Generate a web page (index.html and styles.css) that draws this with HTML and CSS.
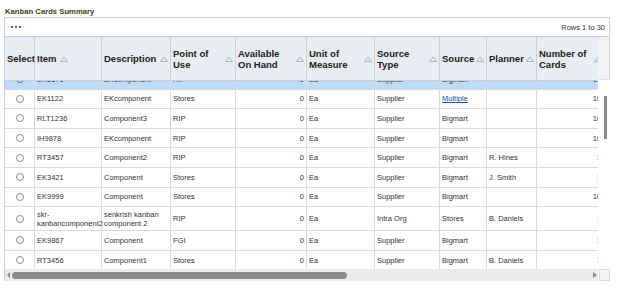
FILE: index.html
```html
<!DOCTYPE html>
<html lang="en">
<head>
    <meta charset="UTF-8">
    <title>Kanban Cards Summary</title>
    <link rel="stylesheet" href="styles.css">
</head>
<body>

<div class="panel">
    <div class="panel-title">Kanban Cards Summary</div>

    <div class="grid">
        <div class="toolbar">
            <span class="dots"><i></i><i></i><i></i></span>
            <span class="rows-info">Rows 1 to 30</span>
        </div>

        <div class="head-wrap">
            <div class="head-clip">
                <div class="head-row">
                    <div class="hcell">Select</div>
                    <div class="hcell hcell-tight"><span>Item</span><svg class="sort" width="8" height="6" viewBox="0 0 8 6"><path d="M0.5 5.5 L4 1 L7.5 5.5 Z"/></svg></div>
                    <div class="hcell"><span>Description</span><svg class="sort" width="8" height="6" viewBox="0 0 8 6"><path d="M0.5 5.5 L4 1 L7.5 5.5 Z"/></svg></div>
                    <div class="hcell"><span>Point of Use</span><svg class="sort" width="8" height="6" viewBox="0 0 8 6"><path d="M0.5 5.5 L4 1 L7.5 5.5 Z"/></svg></div>
                    <div class="hcell"><span>Available On Hand</span><svg class="sort" width="8" height="6" viewBox="0 0 8 6"><path d="M0.5 5.5 L4 1 L7.5 5.5 Z"/></svg></div>
                    <div class="hcell"><span>Unit of Measure</span><svg class="sort" width="8" height="6" viewBox="0 0 8 6"><path d="M0.5 5.5 L4 1 L7.5 5.5 Z"/></svg></div>
                    <div class="hcell"><span>Source Type</span><svg class="sort" width="8" height="6" viewBox="0 0 8 6"><path d="M0.5 5.5 L4 1 L7.5 5.5 Z"/></svg></div>
                    <div class="hcell"><span>Source</span><svg class="sort" width="8" height="6" viewBox="0 0 8 6"><path d="M0.5 5.5 L4 1 L7.5 5.5 Z"/></svg></div>
                    <div class="hcell"><span>Planner</span><svg class="sort" width="8" height="6" viewBox="0 0 8 6"><path d="M0.5 5.5 L4 1 L7.5 5.5 Z"/></svg></div>
                    <div class="hcell"><span>Number of Cards</span><svg class="sort" width="8" height="6" viewBox="0 0 8 6"><path d="M0.5 5.5 L4 1 L7.5 5.5 Z"/></svg></div>
                </div>
            </div>
            <div class="head-gutter"></div>
        </div>

        <div class="body-wrap">
            <div class="body-clip">
                <div class="rows">
                    <div class="row row-selected">
                        <div class="cell cell-select"><span class="radio radio-on"></span></div>
                        <div class="cell">EK5671</div>
                        <div class="cell">EKcomponent</div>
                        <div class="cell">RIP</div>
                        <div class="cell cell-num">0</div>
                        <div class="cell">Ea</div>
                        <div class="cell">Supplier</div>
                        <div class="cell">Bigmart</div>
                        <div class="cell"></div>
                        <div class="cell cell-num cell-last">10</div>
                    </div>
                    <div class="row">
                        <div class="cell cell-select"><span class="radio"></span></div>
                        <div class="cell">EK1122</div>
                        <div class="cell">EKcomponent</div>
                        <div class="cell">Stores</div>
                        <div class="cell cell-num">0</div>
                        <div class="cell">Ea</div>
                        <div class="cell">Supplier</div>
                        <div class="cell"><a class="link" href="#">Multiple</a></div>
                        <div class="cell"></div>
                        <div class="cell cell-num cell-last">10</div>
                    </div>
                    <div class="row">
                        <div class="cell cell-select"><span class="radio"></span></div>
                        <div class="cell">RLT1236</div>
                        <div class="cell">Component3</div>
                        <div class="cell">RIP</div>
                        <div class="cell cell-num">0</div>
                        <div class="cell">Ea</div>
                        <div class="cell">Supplier</div>
                        <div class="cell">Bigmart</div>
                        <div class="cell"></div>
                        <div class="cell cell-num cell-last">10</div>
                    </div>
                    <div class="row">
                        <div class="cell cell-select"><span class="radio"></span></div>
                        <div class="cell">IH9878</div>
                        <div class="cell">EKcomponent</div>
                        <div class="cell">RIP</div>
                        <div class="cell cell-num">0</div>
                        <div class="cell">Ea</div>
                        <div class="cell">Supplier</div>
                        <div class="cell">Bigmart</div>
                        <div class="cell"></div>
                        <div class="cell cell-num cell-last">10</div>
                    </div>
                    <div class="row">
                        <div class="cell cell-select"><span class="radio"></span></div>
                        <div class="cell">RT3457</div>
                        <div class="cell">Component2</div>
                        <div class="cell">RIP</div>
                        <div class="cell cell-num">0</div>
                        <div class="cell">Ea</div>
                        <div class="cell">Supplier</div>
                        <div class="cell">Bigmart</div>
                        <div class="cell">R. Hines</div>
                        <div class="cell cell-num cell-last cell-warn">3</div>
                    </div>
                    <div class="row">
                        <div class="cell cell-select"><span class="radio"></span></div>
                        <div class="cell">EK3421</div>
                        <div class="cell">Component</div>
                        <div class="cell">Stores</div>
                        <div class="cell cell-num">0</div>
                        <div class="cell">Ea</div>
                        <div class="cell">Supplier</div>
                        <div class="cell">Bigmart</div>
                        <div class="cell">J. Smith</div>
                        <div class="cell cell-num cell-last cell-warn">3</div>
                    </div>
                    <div class="row">
                        <div class="cell cell-select"><span class="radio"></span></div>
                        <div class="cell">EK9999</div>
                        <div class="cell">Component</div>
                        <div class="cell">Stores</div>
                        <div class="cell cell-num">0</div>
                        <div class="cell">Ea</div>
                        <div class="cell">Supplier</div>
                        <div class="cell">Bigmart</div>
                        <div class="cell"></div>
                        <div class="cell cell-num cell-last">10</div>
                    </div>
                    <div class="row row-tall">
                        <div class="cell cell-select"><span class="radio"></span></div>
                        <div class="cell">skr-kanbancomponent2</div>
                        <div class="cell">senkrish kanban component 2</div>
                        <div class="cell">RIP</div>
                        <div class="cell cell-num">0</div>
                        <div class="cell">Ea</div>
                        <div class="cell">Intra Org</div>
                        <div class="cell">Stores</div>
                        <div class="cell">B. Daniels</div>
                        <div class="cell cell-num cell-last cell-warn">1</div>
                    </div>
                    <div class="row">
                        <div class="cell cell-select"><span class="radio"></span></div>
                        <div class="cell">EK9867</div>
                        <div class="cell">Component</div>
                        <div class="cell">FGI</div>
                        <div class="cell cell-num">0</div>
                        <div class="cell">Ea</div>
                        <div class="cell">Supplier</div>
                        <div class="cell">Bigmart</div>
                        <div class="cell"></div>
                        <div class="cell cell-num cell-last cell-warn">3</div>
                    </div>
                    <div class="row">
                        <div class="cell cell-select"><span class="radio"></span></div>
                        <div class="cell">RT3456</div>
                        <div class="cell">Component1</div>
                        <div class="cell">Stores</div>
                        <div class="cell cell-num">0</div>
                        <div class="cell">Ea</div>
                        <div class="cell">Supplier</div>
                        <div class="cell">Bigmart</div>
                        <div class="cell">B. Daniels</div>
                        <div class="cell cell-num cell-last cell-warn">3</div>
                    </div>
                </div>
            </div>
            <div class="vscroll"><div class="vthumb"></div></div>
        </div>

        <div class="hscroll-wrap">
            <div class="hscroll">
                <span class="arrow arrow-left"></span>
                <div class="htrack"><div class="hthumb"></div></div>
                <span class="arrow arrow-right"></span>
            </div>
            <div class="corner"></div>
        </div>
    </div>
</div>

</body>
</html>
```

FILE: styles.css
```css
body {
    margin: 0;
    padding: 0;
    background: #fff;
    color: #333;
    font-family: "Liberation Sans", Arial, sans-serif;
}
.panel {
    padding: 7px 0 0 4px;
}
.panel-title {
    font-size: 7.7px;
    font-weight: bold;
    line-height: 10px;
    color: #4a3c16;
    padding-left: 1px;
}
.grid {
    width: 605px;
    border-left: 1px solid #c8d0d9;
}
.toolbar {
    height: 18px;
    display: flex;
    align-items: center;
    justify-content: space-between;
    padding: 0 4px 0 6px;
    border: 1px solid #c8d0d9;
    border-left: none;
}
.dots {
    display: flex;
    gap: 2px;
}
.dots i {
    width: 2px;
    height: 2px;
    background: #3d6db5;
}
.rows-info {
    font-size: 7.5px;
    color: #333;
}

/* header */
.head-wrap {
    display: flex;
}
.head-clip {
    width: 593px;
    overflow: hidden;
}
.head-row {
    width: 600px;
    height: 43px;
    display: grid;
    grid-template-columns: 30px 67px 69px 65px 71px 68px 65px 47px 50px 68px;
    background: #e9ecf0;
    border-bottom: 1px solid #c8d0d9;
}
.head-gutter {
    width: 12px;
    height: 43px;
    box-sizing: border-box;
    background: #f0f2f4;
    border-right: 1px solid #c8d0d9;
    border-bottom: 1px solid #dde2e8;
}
.hcell {
    display: flex;
    align-items: center;
    justify-content: space-between;
    gap: 2px;
    padding: 0 2px;
    border-right: 1px solid #c8d0d9;
    font-size: 9.5px;
    font-weight: bold;
    line-height: 11px;
    color: #222;
    min-width: 0;
}
.hcell-tight {
    justify-content: flex-start;
    gap: 3px;
}
.sort {
    flex: none;
}
.sort path {
    fill: none;
    stroke: #b3b3b3;
    stroke-width: 1;
}

/* body */
.body-wrap {
    display: flex;
}
.body-clip {
    width: 593px;
    height: 188px;
    overflow: hidden;
}
.rows {
    width: 600px;
    margin-top: -11px;
}
.row {
    display: grid;
    grid-template-columns: 30px 67px 69px 65px 71px 68px 65px 47px 50px 68px;
    height: 19.6px;
    border-bottom: 1px solid #d5dce4;
    box-sizing: border-box;
}
.row-tall {
    height: 24px;
}
.row-selected {
    background: #bedcfa;
}
.cell {
    display: flex;
    align-items: center;
    padding: 0 2px;
    border-right: 1px solid #d5dce4;
    font-size: 7.5px;
    line-height: 9px;
    color: #333;
    min-width: 0;
}
.cell-select {
    justify-content: center;
}
.cell-num {
    justify-content: flex-end;
}
.cell-last {
    padding-right: 3px;
}
.cell-warn {
    color: #e38b2a;
}
.link {
    color: #23509e;
    text-decoration: underline;
}
.radio {
    width: 8px;
    height: 8px;
    box-sizing: border-box;
    border: 1px solid #8c8c8c;
    border-radius: 50%;
    background: #fff;
}
.radio-on {
    border-color: #2f6cc0;
    box-shadow: inset 0 0 0 2px #fff, inset 0 0 0 4px #2f6cc0;
}
.vscroll {
    width: 12px;
    height: 188px;
}
.vthumb {
    width: 3px;
    height: 43px;
    margin: 15px 0 0 6px;
    background: #8a8a8a;
}

/* horizontal scrollbar */
.hscroll-wrap {
    display: flex;
    align-items: stretch;
}
.hscroll {
    width: 593px;
    height: 12px;
    display: flex;
    align-items: center;
    background: #ececec;
}
.arrow {
    width: 0;
    height: 0;
    border-top: 3px solid transparent;
    border-bottom: 3px solid transparent;
}
.arrow-left {
    border-right: 3px solid #8a8a8a;
    margin: 0 2px 0 2px;
}
.arrow-right {
    border-left: 4px solid #8a8a8a;
    margin: 0 1px 0 2px;
}
.htrack {
    flex: 1;
}
.hthumb {
    width: 335px;
    height: 7px;
    border-radius: 3.5px;
    background: #8d8d8d;
}
.corner {
    width: 11px;
    height: 12px;
    margin-left: 1px;
    box-sizing: border-box;
    border: 1px solid #dadada;
    background: #f3f3f3;
}
```
